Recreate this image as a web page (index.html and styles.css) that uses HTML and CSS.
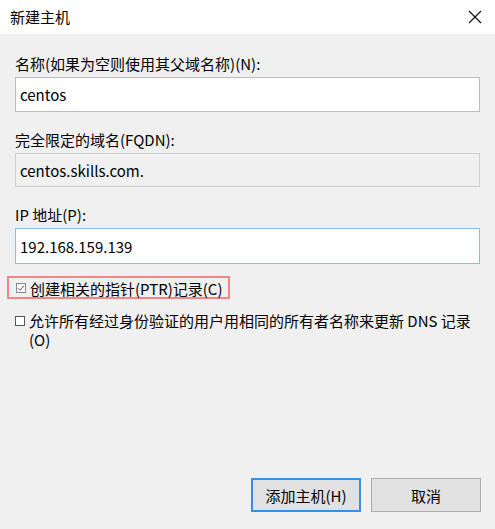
FILE: index.html
```html
<!DOCTYPE html>
<html lang="zh-CN">
<head>
    <meta charset="UTF-8">
    <title>新建主机</title>
    <link rel="stylesheet" href="styles.css">
</head>
<body>
    <div class="dialog">
        <header class="titlebar">
            <span class="title">新建主机</span>
            <button class="close" aria-label="关闭">
                <svg width="14" height="14" viewBox="0 0 14 14">
                    <path d="M1 1 L13 13 M13 1 L1 13" stroke="#111" stroke-width="1.2" fill="none"/>
                </svg>
            </button>
        </header>

        <main class="content">
            <label class="field-label">名称(如果为空则使用其父域名称)(N):</label>
            <input class="textbox" type="text" value="centos">

            <label class="field-label">完全限定的域名(FQDN):</label>
            <input class="textbox readonly" type="text" value="centos.skills.com." readonly>

            <label class="field-label">IP 地址(P):</label>
            <input class="textbox focused" type="text" value="192.168.159.139">

            <div class="check-row highlight">
                <span class="checkbox">
                    <svg width="8" height="8" viewBox="0 0 8 8">
                        <path d="M1 4.2 L3 6.2 L7 1.8" stroke="#555" stroke-width="1" fill="none"/>
                    </svg>
                </span>
                <span>创建相关的指针(PTR)记录(C)</span>
            </div>

            <div class="check-row wrap">
                <span class="checkbox"></span>
                <span>允许所有经过身份验证的用户用相同的所有者名称来更新 DNS 记录(O)</span>
            </div>

            <div class="actions">
                <button class="btn default">添加主机(H)</button>
                <button class="btn">取消</button>
            </div>
        </main>
    </div>
</body>
</html>
```

FILE: styles.css
```css
* {
    margin: 0;
    padding: 0;
    box-sizing: border-box;
}

body {
    font-family: "Noto Sans CJK SC", "Noto Sans", sans-serif;
    font-size: 15px;
    color: #000;
    background: #f0f0f0;
}

.dialog {
    width: 495px;
    height: 529px;
    display: flex;
    flex-direction: column;
}

.titlebar {
    height: 34px;
    background: #fff;
    display: flex;
    align-items: center;
    justify-content: space-between;
    padding: 0 13px 0 10px;
}

.title {
    font-size: 15px;
    line-height: 20px;
}

.close {
    background: none;
    border: none;
    width: 14px;
    height: 14px;
    display: flex;
}

.content {
    flex: 1;
    display: flex;
    flex-direction: column;
    padding: 20px 15px 17px 15px;
}

.field-label {
    line-height: 20px;
    margin-bottom: 3px;
}

.textbox {
    height: 35px;
    width: 100%;
    border: 1px solid #bcbcbc;
    background: #fff;
    font: inherit;
    color: #000;
    padding: 0 4px;
    margin-bottom: 18px;
    outline: none;
}

.textbox.readonly {
    height: 34px;
    background: #f0f0f0;
    border-color: #cfcfcf;
}

.textbox.focused {
    height: 36px;
    border-color: #8fbbe8;
    margin-bottom: 12px;
}

.check-row {
    display: flex;
    align-items: flex-start;
    gap: 4px;
    line-height: 19px;
}

.check-row .checkbox {
    flex: none;
    width: 10px;
    height: 10px;
    margin-top: 5px;
    border: 1px solid #555;
    background: #fff;
    display: flex;
    align-items: center;
    justify-content: center;
}

.check-row .checkbox svg {
    display: block;
}

.highlight {
    margin-left: -8px;
    width: 223px;
    height: 23px;
    padding: 1px 0 0 7px;
    border: 2px solid #f28585;
    align-items: center;
}

.highlight .checkbox {
    margin-top: 0;
    border-color: #888;
}

.wrap {
    margin-top: 12px;
    padding-right: 8px;
}

.actions {
    margin-top: auto;
    margin-right: -1px;
    display: flex;
    justify-content: flex-end;
    gap: 10px;
}

.btn {
    width: 110px;
    height: 34px;
    font: inherit;
    color: #000;
    background: #e1e1e1;
    border: 1px solid #adadad;
}

.btn.default {
    border: 2px solid #3c8ee0;
}
```
